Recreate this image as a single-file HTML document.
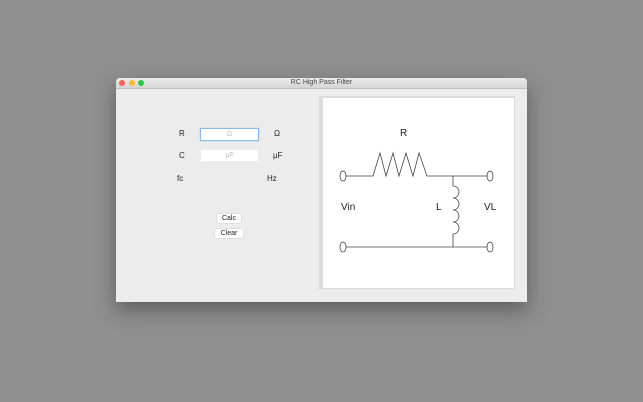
<!DOCTYPE html>
<html><head><style>
body{margin:0;width:643px;height:402px;background:#8f8f8f;font-family:"Liberation Sans",sans-serif;position:relative;overflow:hidden}
.win{position:absolute;left:116px;top:78px;width:411px;height:224px;background:#ececec;box-shadow:0 8px 20px rgba(0,0,0,.35);border-radius:4px 4px 0 0;overflow:hidden}
.tb{height:10px;background:linear-gradient(#ebebeb,#d5d5d5);border-bottom:1px solid #c0c0c0;font-size:7px;text-align:center;line-height:10px;color:#444}
.d{position:absolute;top:2px;width:6px;height:6px;border-radius:50%}
.t{position:absolute;font-size:8px;color:#222}
.in{position:absolute;background:#fff;font-size:7px;color:#bbb;text-align:center;line-height:11px}
.btn{position:absolute;background:#fff;border-radius:2px;box-shadow:0 0 1px #999;font-size:7px;text-align:center;line-height:9px;color:#222}
</style></head><body>
<div class="win">
<div class="tb">RC High Pass Filter</div>
<div class="d" style="left:3px;background:#fc5f57"></div>
<div class="d" style="left:13px;background:#fdbc2e"></div>
<div class="d" style="left:22px;background:#28c840"></div>
<div class="t" style="left:63px;top:51px">R</div>
<div class="in" style="left:84px;top:50px;width:57px;height:11px;border:1px solid #8ab6ee;box-shadow:0 0 1px #8ab6ee">Ω</div>
<div class="t" style="left:158px;top:51px">Ω</div>
<div class="t" style="left:63px;top:73px">C</div>
<div class="in" style="left:85px;top:72px;width:57px;height:11px">μF</div>
<div class="t" style="left:157px;top:73px">μF</div>
<div class="t" style="left:61px;top:96px">fc</div>
<div class="t" style="left:151px;top:96px">Hz</div>
<div class="btn" style="left:101px;top:136px;width:24px;height:9px">Calc</div>
<div class="btn" style="left:99px;top:151px;width:28px;height:9px">Clear</div>
<div style="position:absolute;left:203px;top:18px;width:196px;height:193px;background:#dcdcdc"></div>
<div style="position:absolute;left:207px;top:20px;width:191px;height:190px;background:#fff"></div>
</div>
<svg style="position:absolute;left:0;top:0" width="643" height="402" fill="none" stroke="#444" stroke-width="0.8">
<ellipse cx="343" cy="176" rx="3" ry="5"/><ellipse cx="343" cy="247" rx="3" ry="5"/>
<ellipse cx="490" cy="176" rx="3" ry="5"/><ellipse cx="490" cy="247" rx="3" ry="5"/>
<path d="M346 176H373L380 153L386 176L393 153L399 176L406 153L413 176L419 153L427 176H487"/>
<path d="M346 247H487"/>
<path d="M453 176V186A5 5 0 0 1 453 198A5 5 0 0 1 453 210A5 5 0 0 1 453 222A5 5 0 0 1 453 234V247"/>
<g fill="#222" stroke="none" font-family="Liberation Sans,sans-serif" font-size="10">
<text x="400" y="136">R</text><text x="341" y="210">Vin</text><text x="436" y="210">L</text><text x="484" y="210">VL</text></g>
</svg>
</body></html>
